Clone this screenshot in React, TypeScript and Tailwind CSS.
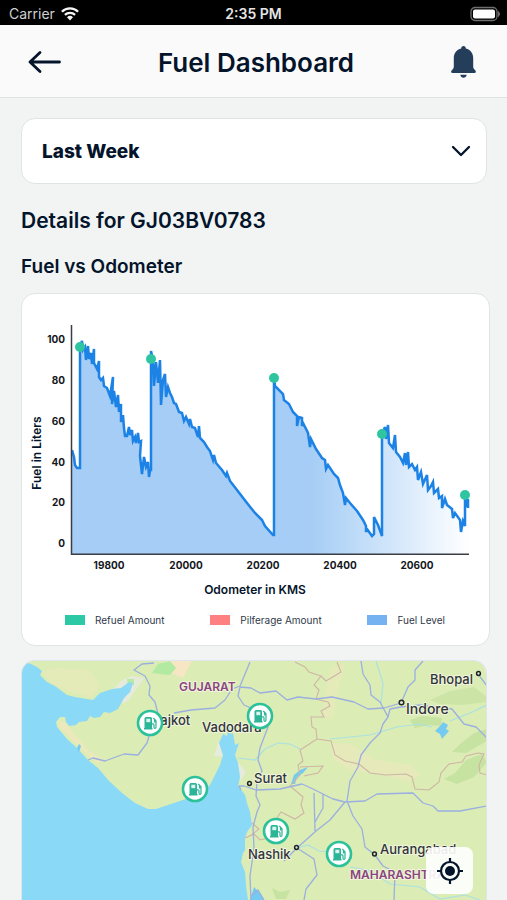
import React from "react";

const LEVELS =
  "72,450 74,457 75,465 77,468 80,468 80,347 82,341 83,350 85,347 86,360 88,346 89,359 91,353 92,364 94,349 94,363 97,369 99,361 99,377 101,380 103,378 104,386 107,388 110,396 113,377 112,404 114,391 116,407 118,395 119,412 121,404 121,422 123,415 124,428 125,436 127,436 129,427 130,435 132,430 133,441 135,437 136,443 138,433 139,442 141,441 140,456 142,474 144,457 146,467 148,462 149,477 150,470 151,470 151,351 153,360 154,386 156,362 158,383 160,360 161,405 163,380 165,374 166,397 168,387 170,393 172,397 174,403 176,404 179,412 182,413 184,421 186,417 189,424 190,419 192,427 195,428 198,437 199,426 200,438 204,442 207,447 210,451 213,460 214,455 216,463 222,470 226,476 227,473 230,481 237,490 247,503 255,513 262,520 265,526 273,535 274,535 274,378 275,386 283,394 284,400 289,404 293,412 297,416 297,426 299,417 302,418 302,426 303,423 308,433 310,447 311,439 316,449 322,458 325,460 326,469 328,465 334,474 338,478 340,485 343,493 345,505 346,498 350,503 357,511 363,520 366,526 366,532 367,529 372,536 374,534 374,517 378,525 382,536 382,434 385,427 386,439 388,425 389,443 393,448 395,435 396,452 400,457 403,463 405,453 406,465 408,452 409,467 412,464 415,470 417,467 418,480 421,472 423,484 427,475 428,490 431,486 433,482 434,493 438,489 439,498 442,496 442,508 445,499 447,505 452,509 453,518 455,513 460,520 461,532 463,521 465,526 465,496 467,507 468,499 468,508";

const REFUELS = [
  [80, 347],
  [151, 359],
  [274, 378],
  [382, 434],
  [465, 495],
];

const Y_TICKS = [
  [100, 340],
  [80, 381],
  [60, 422],
  [40, 463],
  [20, 503],
  [0, 544],
];

const X_TICKS = [
  [19800, 109],
  [20000, 186],
  [20200, 263],
  [20400, 340],
  [20600, 417],
];

const STATIONS = [
  [150, 723],
  [260, 716],
  [195, 789],
  [276, 831],
  [339, 854],
];

function StatusBar() {
  return (
    <div className="grid h-[25px] grid-cols-3 items-center bg-black pt-[2px]">
      <div className="flex items-center gap-[6px] pl-[9px] text-[14px] text-[#cfcfcf]">
        <span>Carrier</span>
        <svg width="18" height="14" viewBox="0 0 18 14" fill="none" stroke="#f5f5f5" aria-hidden="true">
          <path d="M.9 4.7a11.6 11.6 0 0 1 16.2 0" strokeWidth="2.3" />
          <path d="M3.9 7.9a7.3 7.3 0 0 1 10.2 0" strokeWidth="2.2" />
          <path d="M9 13.4 6 10.3a4.3 4.3 0 0 1 6 0Z" fill="#f5f5f5" stroke="none" />
        </svg>
      </div>
      <span className="text-center text-[14px] font-semibold text-[#e4e4e4]">2:35 PM</span>
      <svg className="mr-[6px] justify-self-end" width="31" height="16" viewBox="0 0 31 16" aria-hidden="true">
        <rect x="1" y="1.5" width="26" height="13" rx="4" fill="none" stroke="#6e6e6e" strokeWidth="1.3" />
        <rect x="3" y="3.5" width="22" height="9" rx="2" fill="#fff" />
        <path d="M28.5 5.5q2 2.5 0 5Z" fill="#6e6e6e" stroke="#6e6e6e" />
      </svg>
    </div>
  );
}

function Header() {
  return (
    <header className="flex h-[73px] items-center justify-between border-b border-[#dfe2e3] bg-[#fafafb] pt-[2px] pr-[30px] pl-[28px]">
      <button aria-label="Back">
        <svg width="34" height="24" viewBox="0 0 34 24" fill="none" stroke="#04142b" strokeWidth="2.8" strokeLinecap="round" strokeLinejoin="round" aria-hidden="true">
          <path d="M31.5 12H2M12 2.500 2 12l10 9.500" />
        </svg>
      </button>
      <h1 className="text-[26px] font-semibold">Fuel Dashboard</h1>
      <button aria-label="Notifications">
        <svg width="27" height="34" viewBox="0 0 27 34" fill="#243d5a" aria-hidden="true">
          <path d="M13.500 1c-1.500 0-2.300 1-2.300 2.400C6.500 4.500 3.800 8.200 3.800 13v8.500c0 1.500-.6 2.500-1.800 3.500-1.300 1-1.200 3 .6 3h21.800c1.800 0 1.900-2 .6-3-1.200-1-1.800-2-1.800-3.500V13c0-4.800-2.700-8.500-7.400-9.600C15.800 2 15 1 13.500 1Z" />
          <path d="M10.300 29.700h6.400c-.3 2-1.500 3-3.200 3s-2.900-1-3.200-3Z" />
        </svg>
      </button>
    </header>
  );
}

function PeriodSelect() {
  return (
    <div className="relative">
      <select
        aria-label="Period"
        className="h-[66px] w-full appearance-none rounded-[14px] border border-[#dfe4e4] bg-white px-[20px] pt-[2px] text-[19px] font-extrabold"
      >
        <option>Last Week</option>
      </select>
      <svg
        className="pointer-events-none absolute top-[27px] right-[16px]"
        width="20"
        height="12"
        viewBox="0 0 20 12"
        fill="none"
        stroke="#04142b"
        strokeWidth="2.300"
        strokeLinecap="round"
        strokeLinejoin="round"
        aria-hidden="true"
      >
        <path d="m2 2 8 8 8-8" />
      </svg>
    </div>
  );
}

function FuelChart() {
  return (
    <svg className="block w-full" viewBox="22 294 467 306" role="img" aria-label="Fuel vs Odometer">
      <defs>
        <linearGradient id="level" gradientUnits="userSpaceOnUse" x1="72" x2="469" y1="0" y2="0">
          <stop offset="0" stopColor="#a5cdf5" />
          <stop offset=".6" stopColor="#a5cdf5" />
          <stop offset=".82" stopColor="#d5e8fb" />
          <stop offset="1" stopColor="#fff" />
        </linearGradient>
      </defs>
      <polygon points={`72,554 ${LEVELS} 468,554`} fill="url(#level)" />
      <polyline points={LEVELS} fill="none" stroke="#1c82e6" strokeWidth="2.500" />
      <path d="M71.500 325V554.300H469" fill="none" stroke="#3a3d44" strokeWidth="1.500" />
      {REFUELS.map(([x, y]) => (
        <circle key={x} cx={x} cy={y} r="5" fill="#2fc5a1" />
      ))}
      <g fill="#14171c" fontSize="10" fontWeight="700">
        {Y_TICKS.map(([value, y]) => (
          <text key={value} x="65" y={y + 3} textAnchor="end">
            {value}
          </text>
        ))}
        {X_TICKS.map(([value, x]) => (
          <text key={value} x={x} y="569" textAnchor="middle">
            {value}
          </text>
        ))}
      </g>
      <g fill="#04142b" fontWeight="600" textAnchor="middle">
        <text x="255" y="594" fontSize="12">
          Odometer in KMS
        </text>
        <text transform="translate(41 453) rotate(-90)" fontSize="12">
          Fuel in Liters
        </text>
      </g>
    </svg>
  );
}

function Legend() {
  return (
    <ul className="flex justify-between pt-3 pr-[44px] pb-[17px] pl-[43px] text-[10px] leading-[16px] text-[#30394a]">
      <li className="flex items-center gap-[10px]">
        <span className="h-[10px] w-5 bg-[#2dc8a6]" />
        Refuel Amount
      </li>
      <li className="flex items-center gap-[10px]">
        <span className="h-[10px] w-5 bg-[#ff8080]" />
        Pilferage Amount
      </li>
      <li className="flex items-center gap-[10px]">
        <span className="h-[10px] w-5 bg-[#76b2f2]" />
        Fuel Level
      </li>
    </ul>
  );
}

function Station({ x, y }: { x: number; y: number }) {
  return (
    <g transform={`translate(${x} ${y})`}>
      <circle r="12" fill="#fff" stroke="#2cc19b" strokeWidth="2.600" />
      <path d="M-5.500-4.500q0-1.500 1.500-1.500h4.500q1.500 0 1.500 1.500V5h.500v1.500h-8.500V5h.500Z" fill="#2cb596" />
      <rect x="-3.700" y="-4.300" width="4" height="3.500" fill="#d9f5ee" />
      <path d="M2 .8h1.200q.8 0 .8.900v2.500q0 1.100 1 1.100t1-1.100V-2.200L3.300-5M4.500-3.500v2.500H6" fill="none" stroke="#2cb596" strokeWidth="1.200" />
    </g>
  );
}

function RouteMap() {
  return (
    <svg className="absolute inset-0 h-full w-full" viewBox="22 661 465 239" preserveAspectRatio="xMinYMin slice" role="img" aria-label="Map of fuel stations">
      <rect x="22" y="661" width="465" height="239" fill="#dbecb5" />
      <g fill="#ebe9bc">
        <path d="M42 672 56 668 90 670 100 686 92 697 70 692 52 684Z" opacity=".6" />
        <path d="M58 720 66 723 78 738 88 750 104 760 98 764 78 746 60 728Z" />
        <path d="M330 742 352 745 376 760 410 765 420 775 408 782 380 774 350 770 334 760Z" opacity=".7" />
        <path d="M330 668 345 664 338 690 332 720 322 716 326 690Z" opacity=".6" />
      </g>
      <path d="M166 661h26l-9 17-14-6Z" fill="#f6e6c4" />
      <path d="M152 673 158 664 170 661 176 668 170 675 160 674Z" fill="#b3eaa2" />
      <path d="M112 690 122 680 132 676 144 678 136 690 128 701 121 704 124 694Z" fill="#e6ead9" />
      <path d="M127 679h7v6h-6Z" fill="#b9eaa4" />
      <path d="M219 740 214 756 223 757Z M238 762 246 772 240 782Z" fill="#e5ecdb" />
      <g fill="#c6e3a1">
        <path d="M430 700 450 691 474 687 487 697 486 702 462 705 440 704Z" opacity=".7" />
        <path d="M410 720 422 716 442 718 441 726 428 725 415 728Z" />
        <path d="M487 729 474 733 460 744 452 752 466 753 487 741Z" />
        <path d="M482 754 466 760 455 773 444 779 457 784 474 777 487 762Z" />
        <path d="M272 888 280 892 290 890 286 899 276 899Z" />
      </g>
      <path
        fill="#8ad9f6"
        d="M22 661 31 664 37 667 42 671 40 675 47 682 55 686 67 695 75 697 93 700 97 696 100 693 112 689 121 688 129 682 133 683 130 692 124 698 118 709 110 713 104 712 100 717 94 718 90 716 87 721 79 722 76 725 69 726 66 722 65 717 60 717 56 722 57 727 67 739 77 748 88 760 98 768 109 781 122 793 135 803 148 809 156 809 168 805 180 801 197 795 210 785 220 765 223 755 219 743 223 734 227 736 229 722 231 734 233 733 235 745 239 743 235 755 238 763 240 777 238 786 245 795 247 803 250 812 252 825 247 832 245 838 245 850 243 853 241 862 245 872 246 886 248 900H22Z"
      />
      <path d="M77 748 79 744 81 746 79 752Z M441 725 443 722 448 725 446 729 449 731 442 739 440 734 435 731ZM291 784 294 775 300 770 308 767 303 773 297 777 295 784ZM250 900 254 887 260 893 264 900Z" fill="#74caf0" />
      <g fill="none" stroke="#abe1e1" strokeWidth="1.200">
        <path d="M238 758 255 760 265 749 278 743 290 744 300 749M376 661 383 683 381 704M330 739 370 735 397 727 420 724 432 727M450 721 470 713 487 705M298 848 308 845 319 851 330 852M350 867 368 870 390 884 420 887 440 899 465 895 480 900" />
      </g>
      <g fill="none" stroke="#cfb5a5" strokeWidth="1.100">
        <path d="M295 662 305 667 309 672 321 676 314 685 319 690 316 699 328 702 330 706 321 711 324 717 311 717 312 727 316 729 317 739 300 750 303 761 298 765 300 775 290 786 303 797 301 805 304 813 295 819 281 812 277 818M300 767 323 766 318 773 304 776M317 739 331 741 335 755 345 761 359 764 370 773 386 775 406 774 412 777 415 789 429 790 439 782 441 773 449 764 462 762 466 756 478 753 484 754 479 765 480 773 487 775M321 676 326 681 341 672 337 662M245 838 254 834 260 840 269 838M252 823 259 829 250 836" />
      </g>
      <g fill="none" stroke="#9bafe0" strokeWidth="1.300" strokeLinejoin="round">
        <path d="M154 663 142 664 134 670 145 676 150 686 149 695 155 702 158 714 154 722 150 733 147 743 138 755 124 754 105 761 93 758 88 760M174 713 191 710 215 708 225 700 232 689 240 686 250 662M240 687 251 688 260 693 276 691 287 700 298 697 316 699 332 697 354 702 368 709 384 708 401 703 408 687 415 680 415 670 423 661M240 687 238 696 244 705 258 711 268 727 260 748 258 760 262 771 257 781 256 796 260 805 257 812 253 827 254 848 250 876 251 900M241 790 239 786 244 786 256 790 280 789 302 784 313 789 333 799 345 802 330 820 316 831 297 848 284 861M361 661 363 674 370 685 371 695 380 702 388 717 383 724 380 733 370 743 361 755 358 767 350 781 347 801 353 816 362 829 365 847 375 855 383 866 395 872 394 900M388 717 390 709 401 707 420 705 452 709 464 724 476 727 487 738M345 802 365 801 377 794 413 793 423 803 433 806 438 811 460 811 487 806M297 848 314 859 317 875 306 889 304 900M314 793 315 831M323 794 323 808 315 822M478 674 487 686M251 896 258 890 264 900" />
      </g>
      <g fill="#dce8cc" stroke="#22262a" strokeWidth="1.500">
        <circle cx="401.500" cy="702.500" r="2.300" />
        <circle cx="478.500" cy="673.500" r="1.900" />
        <circle cx="249.500" cy="783.500" r="1.900" />
        <circle cx="296.500" cy="847.500" r="1.900" />
        <circle cx="374.500" cy="854" r="1.900" />
      </g>
      <g fill="#30343a" fontSize="13" fontWeight="500" stroke="#f0f5dc" strokeWidth="2" strokeLinejoin="round" paintOrder="stroke">
        <text x="152" y="725">Rajkot</text>
        <text x="202" y="732">Vadodara</text>
        <text x="254" y="783">Surat</text>
        <text x="248" y="859">Nashik</text>
        <text x="430" y="684">Bhopal</text>
        <text x="406" y="714" fontSize="14">Indore</text>
        <text x="380" y="854">Aurangabad</text>
      </g>
      <g fill="#8a4480" fontSize="12" fontWeight="600" stroke="#f0f5dc" strokeWidth="2" strokeLinejoin="round" paintOrder="stroke">
        <text x="179" y="691">GUJARAT</text>
        <text x="350" y="879">MAHARASHTRA</text>
      </g>
      {STATIONS.map(([x, y]) => (
        <Station key={x} x={x} y={y} />
      ))}
    </svg>
  );
}

export default function App() {
  return (
    <div className="flex h-screen min-h-[720px] flex-col bg-[#f2f3f3] font-['Inter','Liberation_Sans',sans-serif] text-[#04142b]">
      <StatusBar />
      <Header />
      <main className="flex flex-1 flex-col pt-5 pr-[17px] pl-[21px]">
        <div className="pr-[3px]">
          <PeriodSelect />
        </div>
        <h2 className="mt-[21px] text-[21px] leading-[32px] font-semibold">Details for GJ03BV0783</h2>
        <h3 className="mt-4 text-[19px] leading-[28px] font-semibold">Fuel vs Odometer</h3>
        <section className="mt-3 rounded-[14px] border border-[#dfe4e4] bg-white">
          <FuelChart />
          <Legend />
        </section>
        <section className="relative mt-[14px] mr-[3px] flex-1 overflow-hidden rounded-t-[14px] border-x border-t border-[#dfe5ea]">
          <RouteMap />
          <button
            aria-label="Centre on my location"
            className="absolute right-[13px] bottom-[6px] flex h-[47px] w-[47px] items-center justify-center rounded-lg bg-white/90"
          >
            <svg width="28" height="28" viewBox="0 0 28 28" fill="none" stroke="#04142b" strokeWidth="2.200" aria-hidden="true">
              <circle cx="14" cy="14" r="9" />
              <circle cx="14" cy="14" r="5" fill="#04142b" stroke="none" />
              <path d="M14 1v5M14 22v5M1 14h5M22 14h5" />
            </svg>
          </button>
        </section>
      </main>
    </div>
  );
}
